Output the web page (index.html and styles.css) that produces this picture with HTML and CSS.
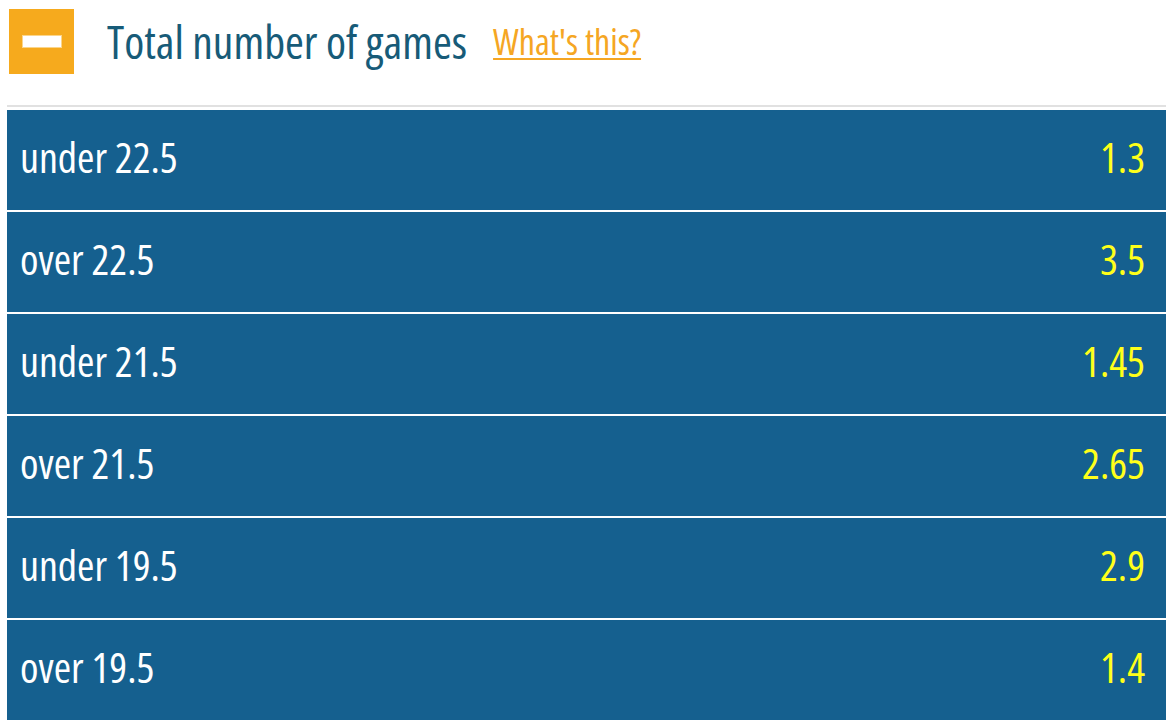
FILE: index.html
```html
<!DOCTYPE html>
<html lang="en">
<head>
<meta charset="utf-8">
<title>Total number of games</title>
<link rel="stylesheet" href="styles.css">
</head>
<body>
<div class="page">
  <div class="header">
    <button class="toggle" aria-label="Collapse"><span class="minus"></span></button>
    <h1 class="title">Total number of games</h1>
    <a class="help" href="#">What's this?</a>
  </div>
  <div class="separator"></div>
  <ul class="odds">
    <li class="row"><span class="label">under 22.5</span><span class="price">1.3</span></li>
    <li class="row"><span class="label">over 22.5</span><span class="price">3.5</span></li>
    <li class="row"><span class="label">under 21.5</span><span class="price">1.45</span></li>
    <li class="row"><span class="label">over 21.5</span><span class="price">2.65</span></li>
    <li class="row"><span class="label">under 19.5</span><span class="price">2.9</span></li>
    <li class="row"><span class="label">over 19.5</span><span class="price">1.4</span></li>
  </ul>
</div>
</body>
</html>
```
FILE: styles.css
```css
html, body {
  margin: 0;
  padding: 0;
  background: #ffffff;
}
.page {
  padding-left: 7px;
  font-family: "Open Sans", "Roboto Condensed", "DejaVu Sans Condensed", sans-serif;
  font-stretch: condensed;
}
.header {
  display: flex;
  align-items: center;
  padding: 9px 0 0 2px;
  height: 65px;
}
.toggle {
  width: 65px;
  height: 65px;
  background: #f6aa1d;
  border: none;
  padding: 0;
  margin: 0;
  display: flex;
  align-items: center;
  justify-content: center;
  flex: none;
}
.minus {
  display: block;
  width: 38px;
  height: 11px;
  background: #ffffff;
  box-shadow: 0 0 0 1px #fbd58a;
}
.title {
  margin: 0 0 2px 33px;
  font-weight: 400;
  font-size: 45.6px;
  font-stretch: condensed;
  color: #175b78;
}
.help {
  margin-left: 26px;
  font-size: 36px;
  font-stretch: condensed;
  color: #f5a623;
  text-decoration: underline;
  text-decoration-thickness: 2px;
  text-underline-offset: 3px;
}
.separator {
  margin-top: 31px;
  height: 2px;
  background: #e1e1e1;
}
.odds {
  list-style: none;
  margin: 3px 0 0 0;
  padding: 0;
  display: flex;
  flex-direction: column;
  gap: 2px;
}
.row {
  box-sizing: border-box;
  height: 100px;
  background: #15608f;
  display: flex;
  align-items: center;
  justify-content: space-between;
  padding: 0 21px 7px 13px;
  font-size: 42px;
  font-weight: 500;
  font-stretch: condensed;
}
.label {
  color: #ffffff;
}
.price {
  color: #ffff1a;
}
```
